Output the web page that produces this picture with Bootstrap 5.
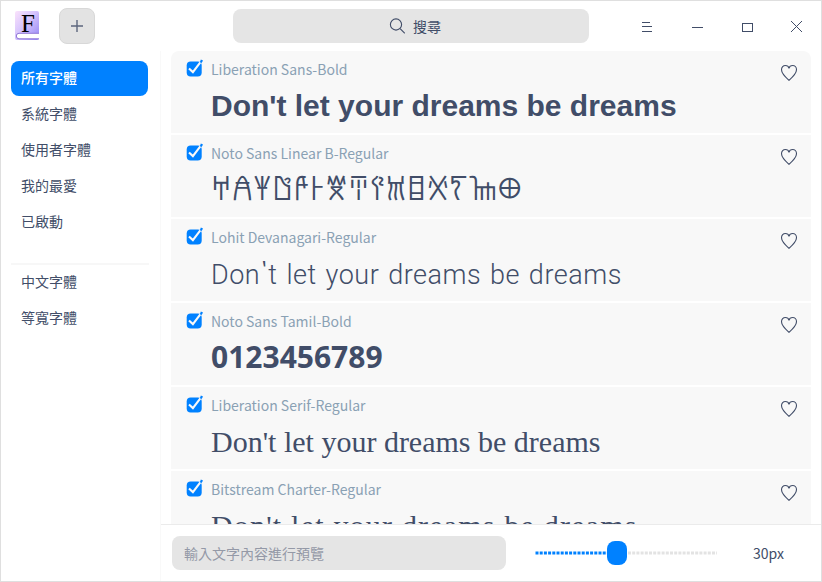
<!DOCTYPE html>
<html lang="zh-TW">
<head>
<meta charset="utf-8">
<title>字體管理器</title>
<link href="https://cdn.jsdelivr.net/npm/bootstrap@5.3.0/dist/css/bootstrap.min.css" rel="stylesheet">
<style>
  body { font-family: "Noto Sans CJK TC", sans-serif; font-size: 14px; line-height: 20px; color: #414d68; background: #fff; }
  .fm-window { width: 822px; height: 582px; border: 1px solid #dfdfdf; }
  .fm-title { height: 50px; }
  .fm-logo { margin-left: 14px; }
  .fm-add { width: 36px; height: 36px; margin-left: 18px; background: #e3e3e3; border: 1px solid #d8d8d8; border-radius: 8px; }
  .fm-search { width: 356px; height: 34px; margin-left: 138px; background: #e5e5e5; border-radius: 8px; gap: 8px; padding-left: 8px; }
  .fm-controls { margin-left: 50px; gap: 34px; padding-top: 1px; }
  .fm-side { width: 160px; padding: 10px 11px 0 10px; border-right: 1px solid #f9f9f9; }
  .fm-side .nav-link { height: 35px; margin-bottom: 1px; padding: 6px 10px 8px; line-height: 20px; color: #414d68; border-radius: 8px; width: 137px; }
  .fm-side .nav-link.active { background: #0081ff; color: #fff; font-weight: 500; }
  .fm-rule { height: 2px; width: 138px; background: #f7f7f7; margin: 22px 0 0; }
  .fm-list { height: 473px; margin: 0 10px; border-radius: 8px 8px 0 0; gap: 2px; }
  .fm-item { height: 82px; background: #f8f8f8; padding: 7px 13px 0 14px; }
  .fm-check { margin-top: 1px; }
  .fm-name { color: #8aa1b4; line-height: 22px; height: 24px; margin-left: 8px; }
  .fm-heart { margin-top: 6px; }
  .fm-sample { font-size: 30px; line-height: 40px; height: 44px; margin: 4px 0 0 26px; white-space: nowrap; }
  .s-sans { font-family: "Liberation Sans", sans-serif; font-weight: 700; }
  .s-linear { font-family: "Noto Sans Linear B", "Noto Sans", sans-serif; margin-top: 3px; }
  .s-lohit { font-family: "Lohit Devanagari", Roboto, sans-serif; font-weight: 300; font-size: 27px; letter-spacing: .52px; padding-top: 2px; }
  .s-tamil { font-family: "Noto Sans", sans-serif; font-weight: 700; margin-top: 3px; }
  .s-serif { font-family: "Liberation Serif", serif; }
  .s-charter { font-family: "Bitstream Charter", "Liberation Serif", serif; letter-spacing: 1.2px; }
  .fm-foot { height: 57px; border-top: 1px solid #ebebeb; padding-left: 11px; }
  .fm-input { width: 334px; height: 34px; background: #e5e5e5; border-radius: 8px; padding: 0 12px; color: #9499a7; }
  .fm-slider { margin-left: 29px; }
  .fm-size { margin-left: 36px; }
</style>
<script src="https://cdn.jsdelivr.net/npm/bootstrap@5.3.0/dist/js/bootstrap.bundle.min.js"></script>
</head>
<body class="overflow-hidden">
<svg class="d-none">
  <symbol id="check" viewBox="0 0 18 18">
    <rect x="1.7" y="2.5" width="15" height="15" rx="4" fill="#0081ff"/>
    <path d="M4 9.500 7.900 13.100 15.300 3.300" fill="none" stroke="#f8f8f8" stroke-width="2.1"/>
    <path d="M15.900 .6 18 1.4 16.600 4 14.900 2.900z" fill="#0081ff"/>
  </symbol>
  <symbol id="heart" viewBox="0 0 18 18">
    <path d="M9 16.3C5.2 12.9 1.5 9.4 1.5 5.7 1.5 3.2 3.3 1.5 5.3 1.5 7.1 1.5 8.6 2.5 9 4.3 9.4 2.5 10.9 1.5 12.7 1.5 14.7 1.5 16.5 3.2 16.5 5.7 16.5 9.4 12.8 12.9 9 16.3z" fill="none" stroke="#414d68" stroke-width="1.1"/>
  </symbol>
</svg>
<div class="fm-window d-flex flex-column">
  <header class="fm-title d-flex align-items-center flex-shrink-0">
    <svg class="fm-logo" width="26" height="32" viewBox="0 0 26 32">
      <linearGradient id="cover" x1="0" y1="0" x2="1" y2="1"><stop offset="0" stop-color="#fbe3fb"/><stop offset=".45" stop-color="#d5c3fd"/><stop offset="1" stop-color="#9385f5"/></linearGradient>
      <rect x="0" y="1" width="24" height="29" rx="2" fill="url(#cover)"/>
      <path d="M24 23.300H4Q1.300 23.300 1.300 26T4 28.800H24" fill="#fff" stroke="#9278d6" stroke-width="1"/>
      <text x="6" y="22" font-family="Liberation Serif, serif" font-size="25" fill="#000">F</text>
    </svg>
    <button class="fm-add btn p-0 d-flex align-items-center justify-content-center" aria-label="新增">
      <svg width="12" height="12"><path d="M6 0V12M0 6H12" stroke="#5c667d" stroke-width="1.4"/></svg>
    </button>
    <div class="fm-search d-flex align-items-center justify-content-center">
      <svg width="16" height="16" fill="none" stroke="#414d68" stroke-width="1.1"><circle cx="7" cy="6.5" r="5.6"/><path d="M11.1 10.6 15.8 15.3"/></svg>
      <span>搜尋</span>
    </div>
    <div class="fm-controls d-flex align-items-center">
      <svg width="16" height="16" fill="none" stroke="#414d68" shape-rendering="crispEdges"><path d="M3 3.5H11M3 7.5H13M3 12.5H13"/></svg>
      <svg width="16" height="16" fill="none" stroke="#414d68" shape-rendering="crispEdges"><path d="M3 8.5H14"/></svg>
      <svg width="16" height="16" fill="none" stroke="#414d68" shape-rendering="crispEdges"><rect x="3.500" y="4.500" width="10" height="8"/></svg>
      <svg width="16" height="16" fill="none" stroke="#414d68"><path d="M2 2 13 13M13 2 2 13"/></svg>
    </div>
  </header>
  <div class="d-flex flex-grow-1">
    <nav class="fm-side nav flex-column flex-nowrap flex-shrink-0">
      <a class="nav-link active">所有字體</a>
      <a class="nav-link">系統字體</a>
      <a class="nav-link">使用者字體</a>
      <a class="nav-link">我的最愛</a>
      <a class="nav-link">已啟動</a>
      <div class="fm-rule"></div>
      <a class="nav-link">中文字體</a>
      <a class="nav-link">等寬字體</a>
    </nav>
    <main class="flex-grow-1 d-flex flex-column">
      <div class="fm-list d-flex flex-column overflow-hidden">
        <div class="fm-item flex-shrink-0">
          <div class="d-flex"><svg class="fm-check" width="18" height="18"><use href="#check"/></svg><span class="fm-name flex-grow-1">Liberation Sans-Bold</span><svg class="fm-heart" width="18" height="18"><use href="#heart"/></svg></div>
          <div class="fm-sample s-sans">Don't let your dreams be dreams</div>
        </div>
        <div class="fm-item flex-shrink-0">
          <div class="d-flex"><svg class="fm-check" width="18" height="18"><use href="#check"/></svg><span class="fm-name flex-grow-1">Noto Sans Linear B-Regular</span><svg class="fm-heart" width="18" height="18"><use href="#heart"/></svg></div>
          <div class="fm-sample s-linear">&#x10000;&#x10001;&#x10002;&#x10003;&#x10004;&#x10005;&#x10006;&#x10007;&#x10008;&#x10009;&#x1000A;&#x1000B;&#x1000D;&#x1000E;&#x1000F;</div>
        </div>
        <div class="fm-item flex-shrink-0">
          <div class="d-flex"><svg class="fm-check" width="18" height="18"><use href="#check"/></svg><span class="fm-name flex-grow-1">Lohit Devanagari-Regular</span><svg class="fm-heart" width="18" height="18"><use href="#heart"/></svg></div>
          <div class="fm-sample s-lohit">Don't let your dreams be dreams</div>
        </div>
        <div class="fm-item flex-shrink-0">
          <div class="d-flex"><svg class="fm-check" width="18" height="18"><use href="#check"/></svg><span class="fm-name flex-grow-1">Noto Sans Tamil-Bold</span><svg class="fm-heart" width="18" height="18"><use href="#heart"/></svg></div>
          <div class="fm-sample s-tamil">0123456789</div>
        </div>
        <div class="fm-item flex-shrink-0">
          <div class="d-flex"><svg class="fm-check" width="18" height="18"><use href="#check"/></svg><span class="fm-name flex-grow-1">Liberation Serif-Regular</span><svg class="fm-heart" width="18" height="18"><use href="#heart"/></svg></div>
          <div class="fm-sample s-serif">Don't let your dreams be dreams</div>
        </div>
        <div class="fm-item flex-shrink-0">
          <div class="d-flex"><svg class="fm-check" width="18" height="18"><use href="#check"/></svg><span class="fm-name flex-grow-1">Bitstream Charter-Regular</span><svg class="fm-heart" width="18" height="18"><use href="#heart"/></svg></div>
          <div class="fm-sample s-charter">Don't let your dreams be dreams</div>
        </div>
      </div>
      <footer class="fm-foot d-flex align-items-center">
        <div class="fm-input d-flex align-items-center">輸入文字內容進行預覽</div>
        <svg class="fm-slider" width="182" height="24">
          <path d="M0.500 12H74" stroke="#0081ff" stroke-width="3" stroke-dasharray="3 1.2"/>
          <path d="M93 12H182" stroke="#e3e3e3" stroke-width="3" stroke-dasharray="3 1.2"/>
          <rect x="72" y="0" width="20" height="24" rx="8" fill="#0081ff"/>
        </svg>
        <span class="fm-size">30px</span>
      </footer>
    </main>
  </div>
</div>
</body>
</html>
